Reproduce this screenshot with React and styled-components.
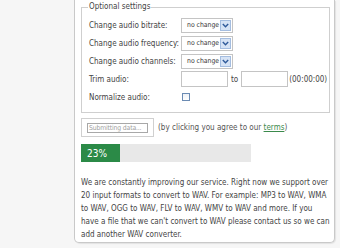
import React from "react";
import styled, { createGlobalStyle } from "styled-components";

const GlobalStyle = createGlobalStyle`
  html, body {
    margin: 0;
    padding: 0;
    background: #f6f6f6;
    overflow: hidden;
  }
  body {
    font-family: "DejaVu Sans Condensed", "DejaVu Sans", Verdana, sans-serif;
    font-stretch: condensed;
  }
`;

const Page = styled.div`
  display: flex;
  width: 340px;
  height: 248px;
`;

const Panel = styled.div`
  box-sizing: border-box;
  margin-left: 74px;
  width: 261px;
  height: 243px;
  padding: 2px 4px 0 6px;
  background: #fff;
  border: 1px solid #c9c9c9;
  border-top: none;
  border-radius: 0 0 5px 5px;
  box-shadow: 1px 1px 1px rgba(0, 0, 0, 0.08);
`;

const Fieldset = styled.fieldset`
  margin: 0;
  padding: 4px 6px 6px 7px;
  border: 1px solid #cfcfcf;
  min-width: 0;
`;

const Legend = styled.legend`
  padding: 0 1px;
  margin-left: -1px;
  font-size: 8px;
  line-height: 10px;
  color: #444;
`;

const Grid = styled.div`
  display: grid;
  grid-template-columns: 92px auto;
  grid-auto-rows: 18px;
  align-items: center;
  font-size: 8px;
  color: #444;
`;

const Label = styled.span`
  white-space: nowrap;
`;

const Cell = styled.div`
  display: flex;
  align-items: center;
  gap: 3px;
  white-space: nowrap;
`;

const TimeHint = styled.span`
  margin-left: -2px;
`;

const SelectBox = styled.div`
  box-sizing: border-box;
  display: flex;
  align-items: center;
  justify-content: space-between;
  width: 52px;
  height: 15px;
  padding: 0 1px 0 5px;
  border: 1px solid #c4c4c4;
  background: #fff;
  font-size: 6.8px;
  color: #333;
  white-space: nowrap;
`;

const Arrow = styled.span`
  box-sizing: border-box;
  display: flex;
  flex-shrink: 0;
  align-items: center;
  justify-content: center;
  width: 11px;
  height: 11px;
  border: 1px solid #a4bde0;
  background: #d6e3f5;
`;

const TextInput = styled.div`
  box-sizing: border-box;
  width: ${(p) => p.$w}px;
  height: 16px;
  border: 1px solid #c4c4c4;
  background: #fff;
`;

const Checkbox = styled.span`
  box-sizing: border-box;
  display: block;
  width: 8px;
  height: 8px;
  margin-left: 1px;
  border: 1px solid #6b8bb3;
  background: linear-gradient(#eef2f7, #fff);
`;

const SubmitRow = styled.div`
  display: flex;
  align-items: center;
  gap: 4px;
  margin-top: 5px;
  font-size: 8px;
  color: #555;
`;

const SubmitButton = styled.span`
  box-sizing: border-box;
  display: flex;
  align-items: center;
  width: 73px;
  height: 19px;
  padding: 0 5px;
  border: 1px solid #d0d0d0;
  background: #fff;
`;

const SubmitInner = styled.span`
  box-sizing: border-box;
  display: block;
  width: 62px;
  height: 10px;
  line-height: 8px;
  padding-left: 1px;
  border: 1px solid #a8a8a8;
  color: #a0a0a0;
  font-size: 6.8px;
  letter-spacing: -0.15px;
  white-space: nowrap;
`;

const Link = styled.a`
  color: #3b8a4c;
  text-decoration: underline;
`;

const Progress = styled.div`
  display: flex;
  width: 170px;
  height: 18px;
  margin-top: 7px;
  background: #e8e8e8;
`;

const ProgressFill = styled.div`
  display: flex;
  align-items: center;
  padding-left: 6px;
  box-sizing: border-box;
  background: #2b8a47;
  color: #fff;
  font-size: 10px;
`;

const Text = styled.p`
  margin: 14px 0 0;
  font-size: 8px;
  line-height: 13px;
  color: #444;
`;

const Chevron = () => (
  <svg width="7" height="5" viewBox="0 0 7 5">
    <path d="M0.8 1 L3.5 3.8 L6.2 1" fill="none" stroke="#2f5a9a" strokeWidth="1.4" />
  </svg>
);

const Select = () => (
  <SelectBox>
    <span>no change</span>
    <Arrow>
      <Chevron />
    </Arrow>
  </SelectBox>
);

const progress = 23;

export default function App() {
  return (
    <Page>
      <GlobalStyle />
      <Panel>
        <Fieldset>
          <Legend>Optional settings</Legend>
          <Grid>
            <Label>Change audio bitrate:</Label>
            <Cell>
              <Select />
            </Cell>
            <Label>Change audio frequency:</Label>
            <Cell>
              <Select />
            </Cell>
            <Label>Change audio channels:</Label>
            <Cell>
              <Select />
            </Cell>
            <Label>Trim audio:</Label>
            <Cell>
              <TextInput $w={47} />
              <span>to</span>
              <TextInput $w={47} />
              <TimeHint>(00:00:00)</TimeHint>
            </Cell>
            <Label>Normalize audio:</Label>
            <Cell>
              <Checkbox />
            </Cell>
          </Grid>
        </Fieldset>
        <SubmitRow>
          <SubmitButton>
            <SubmitInner>Submitting data...</SubmitInner>
          </SubmitButton>
          <span>
            (by clicking you agree to our <Link href="#">terms</Link>)
          </span>
        </SubmitRow>
        <Progress>
          <ProgressFill style={{ width: `${progress}%` }}>{progress}%</ProgressFill>
        </Progress>
        <Text>
          We are constantly improving our service. Right now we support over 20 input
          formats to convert to WAV. For example: MP3 to WAV, WMA to WAV, OGG to WAV,
          FLV to WAV, WMV to WAV and more. If you have a file that we can't convert to
          WAV please contact us so we can add another WAV converter.
        </Text>
      </Panel>
    </Page>
  );
}
